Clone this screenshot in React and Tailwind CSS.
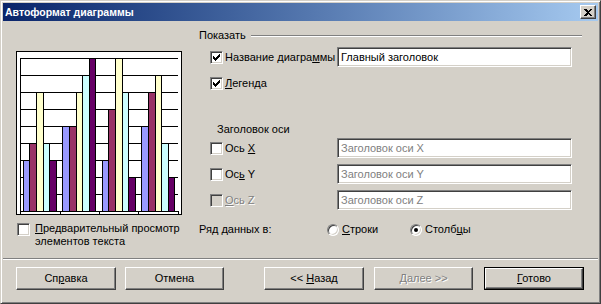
import React from "react";

const FONT = "font-['Liberation_Sans',sans-serif] text-[11px] leading-[13px]";

const SERIES = ["#9999FF", "#993366", "#FFFFCC", "#CCFFFF", "#660066"];
const DATA = [
  [3, 4, 7, 4, 3],
  [5, 5, 7, 8, 9],
  [3, 6, 9, 7, 2],
  [5, 7, 8, 4, 2],
];

// 7x7 pixel check mark, classic style
const CHECK_ROWS = [[6, 6], [5, 6], [0, 0, 4, 6], [0, 1, 3, 5], [0, 4], [1, 3], [2, 2]];

function Check({ checked, disabled }) {
  return (
    <span
      className={`flex h-[13px] w-[13px] shrink-0 items-center justify-center border border-[#808080] border-b-white border-r-white shadow-[inset_1px_1px_0_#404040,inset_-1px_-1px_0_#d4d0c8] ${
        disabled ? "bg-[#d4d0c8]" : "bg-white"
      }`}
    >
      {checked && (
        <svg width="7" height="7" viewBox="0 0 7 7" shapeRendering="crispEdges">
          {CHECK_ROWS.map((r, y) => {
            const out = [];
            for (let i = 0; i < r.length; i += 2) {
              out.push(<rect key={`${y}-${i}`} x={r[i]} y={y} width={r[i + 1] - r[i] + 1} height="1" fill="#000" />);
            }
            return out;
          })}
        </svg>
      )}
    </span>
  );
}

function Radio({ checked }) {
  return (
    <span className="flex h-[12px] w-[12px] shrink-0 items-center justify-center rounded-full border border-[#808080] border-b-white border-r-white bg-white shadow-[inset_1px_1px_0_#404040,inset_-1px_-1px_0_#d4d0c8]">
      {checked && <span className="h-[4px] w-[4px] rounded-full bg-black" />}
    </span>
  );
}

function Field({ value, dim }) {
  return (
    <div
      className={`flex h-[20px] w-[235px] items-center border border-[#808080] border-b-white border-r-white bg-white pl-[3px] shadow-[inset_1px_1px_0_#404040,inset_-1px_-1px_0_#d4d0c8] ${
        dim ? "text-[#808080]" : "text-black"
      }`}
    >
      {value}
    </div>
  );
}

function Button({ children, isDefault, disabled, w = "w-[100px]" }) {
  return (
    <div className={`h-[23px] ${w} shrink-0 ${isDefault ? "border border-black" : ""}`}>
      <div
        className={`flex h-full w-full items-center justify-center border border-white border-b-[#404040] border-r-[#404040] shadow-[inset_-1px_-1px_0_#808080] ${
          disabled ? "text-[#808080] [text-shadow:1px_1px_0_#fff]" : "text-black"
        }`}
      >
        <span className="whitespace-pre">{children}</span>
      </div>
    </div>
  );
}

function Chart() {
  return (
    <svg width="166" height="164" viewBox="0 0 166 164" shapeRendering="crispEdges">
      <rect x="0.5" y="0.5" width="165" height="163" fill="#fff" stroke="#000" />
      {Array.from({ length: 9 }, (_, i) => (
        <line key={i} x1="4" x2="162" y1={7.5 + 17 * i} y2={7.5 + 17 * i} stroke="#000" />
      ))}
      {DATA.map((g, gi) =>
        g.map((v, j) => {
          const x = 7.3 + gi * 39.5 + j * 6.6;
          return (
            <rect
              key={`${gi}-${j}`}
              x={x}
              y={160.5 - v * 17}
              width="6.6"
              height={v * 17}
              fill={SERIES[j]}
              stroke="#000"
            />
          );
        })
      )}
      <line x1="4.5" x2="4.5" y1="7" y2="163" stroke="#000" />
      <line x1="4" x2="163" y1="160.5" y2="160.5" stroke="#000" />
      {[4.5, 44, 83.5, 122.5, 162].map((x) => (
        <line key={x} x1={x} x2={x} y1="160" y2="163" stroke="#000" />
      ))}
    </svg>
  );
}

export default function App() {
  return (
    <div className={`h-[304px] w-[601px] overflow-hidden bg-[#d4d0c8] whitespace-nowrap ${FONT}`}>
      <div className="flex h-full w-full flex-col border border-[#d4d0c8] border-b-[#404040] border-r-[#404040] p-[2px] shadow-[inset_1px_1px_0_#fff,inset_-1px_-1px_0_#808080]">
        {/* Title bar */}
        <div className="flex h-[18px] shrink-0 items-center justify-between bg-gradient-to-r from-[#0a246a] to-[#a6caf0] pl-[2px] pr-[2px]">
          <span className="font-['Liberation_Sans',sans-serif] text-[10.5px] font-bold text-white">
            Автоформат диаграммы
          </span>
          <div className="flex h-[14px] w-[16px] items-center justify-center border border-white border-b-[#404040] border-r-[#404040] bg-[#d4d0c8] shadow-[inset_-1px_-1px_0_#808080]">
            <svg width="8" height="7" viewBox="0 0 8 7" shapeRendering="crispEdges">
              <path d="M0 0h2l2 2 2-2h2L5 3.5 8 7H6L4 5 2 7H0l3-3.5z" fill="#000" />
            </svg>
          </div>
        </div>

        {/* Body */}
        <div className="flex h-[237px] shrink-0 pl-[13px]">
          {/* Left column */}
          <div className="flex w-[183px] shrink-0 flex-col pt-[30px]">
            <Chart />
            <div className="mt-[7px] flex items-start gap-[5px] pl-px">
              <span className="mt-px">
                <Check />
              </span>
              <span>
                <u>П</u>редварительный просмотр
                <br />
                элементов текста
              </span>
            </div>
          </div>

          {/* Right column */}
          <div className="flex w-[383px] flex-col pt-[8px]">
            <div className="flex h-[13px] items-center gap-[5px]">
              <span>Показать</span>
              <div className="h-[2px] flex-1 border-t border-b border-t-[#808080] border-b-white" />
            </div>

            <div className="mt-[5px] flex h-[20px] items-center pl-[11px]">
              <Check checked />
              <span className="ml-[2px] w-[112px]">
                Название диагра<u>м</u>мы
              </span>
              <Field value="Главный заголовок" />
            </div>

            <div className="mt-[10px] flex h-[13px] items-center pl-[11px]">
              <Check checked />
              <span className="ml-[2px]">
                <u>Л</u>егенда
              </span>
            </div>

            <div className="mt-[33px] h-[13px] pl-[18px]">Заголовок оси</div>

            <div className="mt-[2px] flex flex-col gap-[6px] pl-[11px]">
              <div className="flex h-[20px] items-center">
                <Check />
                <span className="ml-[2px] w-[112px]">
                  Ось <u>X</u>
                </span>
                <Field value="Заголовок оси X" dim />
              </div>
              <div className="flex h-[20px] items-center">
                <Check />
                <span className="ml-[2px] w-[112px]">
                  Ос<u>ь</u> Y
                </span>
                <Field value="Заголовок оси Y" dim />
              </div>
              <div className="flex h-[20px] items-center">
                <Check disabled />
                <span className="ml-[2px] w-[112px] text-[#808080] [text-shadow:1px_1px_0_#fff]">
                  <u>О</u>сь Z
                </span>
                <Field value="Заголовок оси Z" dim />
              </div>
            </div>

            <div className="mt-[13px] flex h-[13px] items-center">
              <span className="w-[128px]">Ряд данных в:</span>
              <Radio />
              <span className="ml-[3px] w-[68px]">
                <u>С</u>троки
              </span>
              <Radio checked />
              <span className="ml-[3px]">
                Столб<u>ц</u>ы
              </span>
            </div>
          </div>
        </div>

        {/* Separator */}
        <div className="h-[2px] shrink-0 border-t border-b border-t-[#808080] border-b-white" />

        {/* Buttons */}
        <div className="mt-[7px] flex pl-[13px]">
          <Button>
            Сп<u>р</u>авка
          </Button>
          <div className="ml-[9px]">
            <Button w="w-[99px]">Отмена</Button>
          </div>
          <div className="ml-[40px]">
            <Button>
              {"<< "}
              <u>Н</u>азад
            </Button>
          </div>
          <div className="ml-[10px]">
            <Button w="w-[99px]" disabled>
              <u>Д</u>алее {">>"}
            </Button>
          </div>
          <div className="ml-[11px]">
            <Button isDefault>
              <u>Г</u>отово
            </Button>
          </div>
        </div>
      </div>
    </div>
  );
}
